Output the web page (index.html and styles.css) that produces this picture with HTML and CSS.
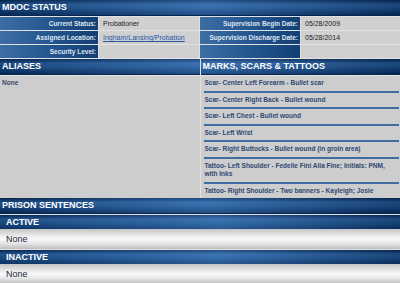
FILE: index.html
```html
<!DOCTYPE html>
<html lang="en">
<head>
  <meta charset="UTF-8" />
  <title>Offender Profile</title>
  <link rel="stylesheet" href="styles.css">
</head>
<body>

  <div class="bar">MDOC STATUS</div>
  <div class="status">
    <div class="lbl">Current Status:</div>
    <div class="val">Probationer</div>
    <div class="lbl">Supervision Begin Date:</div>
    <div class="val">05/28/2009</div>

    <div class="lbl">Assigned Location:</div>
    <div class="val"><a href="#">Ingham/Lansing/Probation</a></div>
    <div class="lbl">Supervision Discharge Date:</div>
    <div class="val">05/28/2014</div>

    <div class="lbl">Security Level:</div>
    <div class="val"></div>
    <div class="lbl"></div>
    <div class="val"></div>
  </div>

  <div class="cols">
    <div class="col">
      <div class="bar">ALIASES</div>
      <div class="col-body">
        <div class="alias">None</div>
      </div>
    </div>
    <div class="col">
      <div class="bar">MARKS, SCARS &amp; TATTOOS</div>
      <ul class="marks col-body">
        <li>Scar- Center Left Forearm - Bullet scar</li>
        <li>Scar- Center Right Back - Bullet wound</li>
        <li>Scar- Left Chest - Bullet wound</li>
        <li>Scar- Left Wrist</li>
        <li>Scar- Right Buttocks - Bullet wound (in groin area)</li>
        <li>Tattoo- Left Shoulder - Fedelle Fini Alla Fine; Initials: PNM, with Inks</li>
        <li>Tattoo- Right Shoulder - Two banners - Kayleigh; Josie</li>
      </ul>
    </div>
  </div>

  <div class="bar">PRISON SENTENCES</div>
  <div class="sub">ACTIVE</div>
  <div class="none">None</div>
  <div class="sub">INACTIVE</div>
  <div class="none">None</div>

</body>
</html>
```

FILE: styles.css
```css
body{margin:0;background:#e2e2e2;font-family:"Liberation Sans", Arial, sans-serif;overflow:hidden;}

/* blue header bars */
.bar{height:15px;line-height:15px;padding-left:2px;color:#fff;font-size:9px;font-weight:bold;
  border-bottom:1px solid #06264f;
  background:
    linear-gradient(90deg, rgba(0,15,45,.25) 0%, rgba(110,165,230,.28) 52%, rgba(0,15,45,.3) 100%) fixed,
    linear-gradient(180deg, #072a58 0%, #28609f 30%, #1f5590 55%, #0d3b72 85%, #082e5e 100%);}

/* status grid */
.status{display:grid;grid-template-columns:98px 100px 100px 1fr;grid-auto-rows:13px;gap:1px;padding-top:1px;background:#e2e2e2;}
.lbl{background:linear-gradient(90deg, #3d6da4 0%, #24568f 50%, #123f74 100%);color:#dfe6f0;font-size:6.5px;font-weight:bold;text-align:right;padding-right:2px;line-height:13px;white-space:nowrap;}
.val{background:#d0d0d0;color:#222;font-size:7px;line-height:13px;padding-left:4px;}
.val a{color:#2457a8;}

/* aliases / marks */
.cols{display:flex;gap:1px;margin-top:1px;}
.col{flex:1;display:flex;flex-direction:column;}
.col-body{flex:1;background:#cdcdcd;border-top:1px solid #e6e6e6;}
.alias{font-size:6.5px;font-weight:bold;color:#3b4a68;padding:3px 2px;}
.marks{list-style:none;margin:0;padding:0 1px 0 3px;}
.marks li{font-size:6.5px;font-weight:bold;color:#2e4873;line-height:8px;padding:3px 0 3.6px 1px;border-bottom:2px solid #416c9f;}
.marks li:last-child{border-bottom:none;}

/* sentences */
.sub{height:14px;line-height:14px;padding-left:6px;color:#fff;font-size:9px;font-weight:bold;margin-top:1px;
  background:
    linear-gradient(90deg, rgba(0,15,45,.2) 0%, rgba(110,165,230,.28) 55%, rgba(0,15,45,.3) 100%) fixed,
    linear-gradient(180deg, #072a58 0%, #2a62a2 30%, #1f5590 60%, #0c396f 100%);}
.none{height:20px;line-height:20px;padding-left:6px;color:#1a2540;font-size:9px;
  background:linear-gradient(180deg, #c4c4c4 0%, #e6e6e6 30%, #fafafa 50%, #e2e2e2 75%, #bdbdbd 100%);}
```
